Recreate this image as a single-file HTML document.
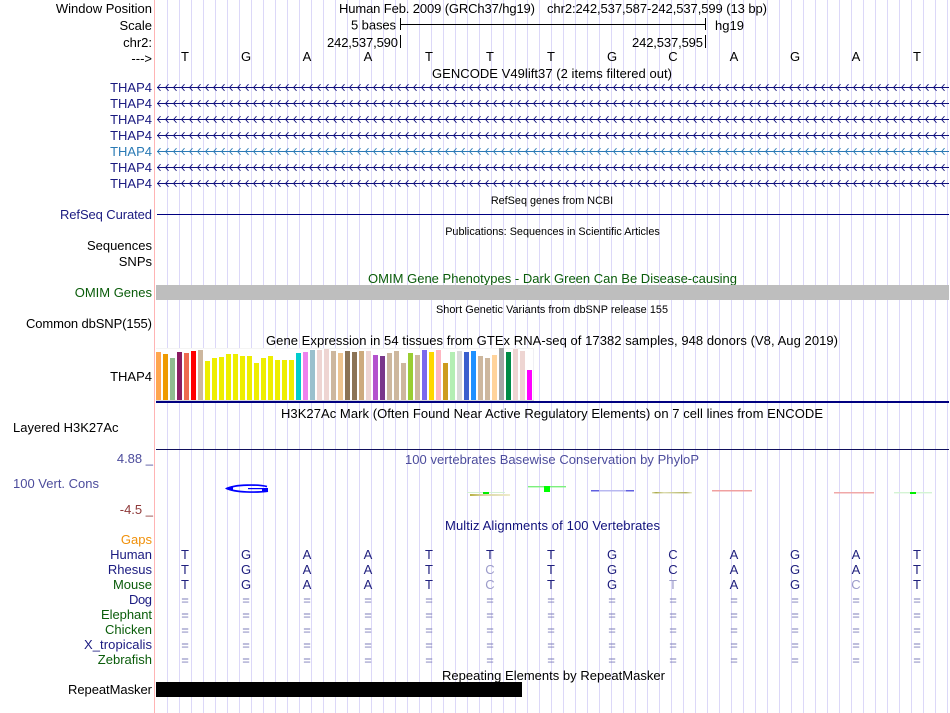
<!DOCTYPE html>
<html><head><meta charset="utf-8"><title>Genome Browser</title>
<style>
html,body{margin:0;padding:0;background:#fff;width:950px;height:713px;overflow:hidden}
svg{display:block}
text{font-family:"Liberation Sans",sans-serif;font-size:13px;fill:#000;white-space:pre}
.r{text-anchor:end}
.c{text-anchor:middle}
.s{font-size:10.85px}
.n{fill:#1a1a80}
.g{fill:#0a5c0a}
.b{text-anchor:middle;fill:#20207e}
.f{text-anchor:middle;fill:#9c9cca}
.e{text-anchor:middle;fill:#7c7cb8}
</style></head><body>
<svg width="950" height="713" viewBox="0 0 950 713" xmlns="http://www.w3.org/2000/svg">
<defs>
<pattern id="grid" patternUnits="userSpaceOnUse" x="167" y="0" width="12" height="713"><rect x="0" y="0" width="1" height="713" fill="#dcd8f8"/></pattern>
<pattern id="cn" patternUnits="userSpaceOnUse" x="157" y="83" width="8" height="16"><path d="M3.5 1.2 L0.6 4.5 L3.5 7.8" fill="none" stroke="#10107c" stroke-width="0.9"/></pattern>
<pattern id="cb" patternUnits="userSpaceOnUse" x="157" y="83" width="8" height="16"><path d="M3.5 1.2 L0.6 4.5 L3.5 7.8" fill="none" stroke="#2a7ab5" stroke-width="0.9"/></pattern>
<linearGradient id="ol" x1="0" x2="1" y1="0" y2="0"><stop offset="0" stop-color="#b8b040"/><stop offset=".3" stop-color="#d8d4a0"/><stop offset="1" stop-color="#efeccc"/></linearGradient>
<linearGradient id="ol2" x1="0" x2="1" y1="0" y2="0"><stop offset="0" stop-color="#e0e0b0"/><stop offset=".1" stop-color="#a8a848"/><stop offset=".3" stop-color="#dcdcb0"/><stop offset=".85" stop-color="#b4b464"/><stop offset="1" stop-color="#eeeed0"/></linearGradient>
</defs>
<rect width="950" height="713" fill="#fff"/>
<rect x="167" y="0" width="781" height="713" fill="url(#grid)"/>
<rect x="154" y="0" width="1" height="713" fill="#ffb4b4"/>

<!-- side labels -->
<text class="r" x="152" y="13">Window Position</text>
<text class="r" x="152" y="30">Scale</text>
<text class="r" x="152" y="47">chr2:</text>
<text class="r" x="152" y="63">---&gt;</text>
<text class="r n" x="152" y="92">THAP4</text>
<text class="r n" x="152" y="108">THAP4</text>
<text class="r n" x="152" y="124">THAP4</text>
<text class="r n" x="152" y="140">THAP4</text>
<text class="r" x="152" y="156" style="fill:#2a7ab5">THAP4</text>
<text class="r n" x="152" y="172">THAP4</text>
<text class="r n" x="152" y="188">THAP4</text>
<text class="n" x="60" y="219" textLength="92">RefSeq Curated</text>
<text class="r" x="152" y="250">Sequences</text>
<text class="r" x="152" y="266">SNPs</text>
<text class="r g" x="152" y="297">OMIM Genes</text>
<text x="26" y="328" textLength="126">Common dbSNP(155)</text>
<text class="r" x="152" y="381">THAP4</text>
<text x="13" y="432">Layered H3K27Ac</text>
<text class="r" x="153" y="463" style="fill:#4c4c9c">4.88 _</text>
<text x="13" y="488" style="fill:#4c4c9c">100 Vert. Cons</text>
<text class="r" x="153" y="514" style="fill:#8f3a3a">-4.5 _</text>
<text class="r" x="152" y="544" style="fill:#f0900a">Gaps</text>
<text class="r n" x="152" y="559">Human</text>
<text class="r n" x="152" y="574">Rhesus</text>
<text class="r g" x="152" y="589">Mouse</text>
<text class="n" x="129" y="604" textLength="23">Dog</text>
<text class="g" x="101" y="619" textLength="51">Elephant</text>
<text class="r g" x="152" y="634">Chicken</text>
<text class="n" x="84" y="649" textLength="68">X_tropicalis</text>
<text class="r g" x="152" y="664">Zebrafish</text>
<text x="68" y="694" textLength="84">RepeatMasker</text>

<!-- header -->
<text x="339" y="13" textLength="196">Human Feb. 2009 (GRCh37/hg19)</text>
<text x="547" y="13" textLength="220">chr2:242,537,587-242,537,599 (13 bp)</text>
<text x="351" y="29.5" textLength="45">5 bases</text>
<rect x="400" y="18" width="1" height="12" fill="#000"/>
<rect x="400" y="24" width="306" height="1" fill="#000"/>
<rect x="705" y="18" width="1" height="12" fill="#000"/>
<text x="715" y="30">hg19</text>
<text x="327" y="47" textLength="71">242,537,590</text>
<rect x="400" y="35" width="1" height="13" fill="#000"/>
<text x="632" y="47" textLength="71">242,537,595</text>
<rect x="705" y="35" width="1" height="13" fill="#000"/>
<text class="c" x="185 246 307 368 429 490 551 612 673 734 795 856 917" y="61">TGAATTTGCAGAT</text>
<text x="432" y="78" textLength="240">GENCODE V49lift37 (2 items filtered out)</text>

<!-- gene rows -->
<g fill="#10107c">
<rect x="157" y="87" width="792" height="1"/>
<rect x="157" y="103" width="792" height="1"/>
<rect x="157" y="119" width="792" height="1"/>
<rect x="157" y="135" width="792" height="1"/>
<rect x="157" y="167" width="792" height="1"/>
<rect x="157" y="183" width="792" height="1"/>
</g>
<rect x="157" y="151" width="792" height="1" fill="#2a7ab5"/>
<rect x="157" y="83" width="792" height="9" fill="url(#cn)"/>
<rect x="157" y="99" width="792" height="9" fill="url(#cn)"/>
<rect x="157" y="115" width="792" height="9" fill="url(#cn)"/>
<rect x="157" y="131" width="792" height="9" fill="url(#cn)"/>
<rect x="157" y="147" width="792" height="9" fill="url(#cb)"/>
<rect x="157" y="163" width="792" height="9" fill="url(#cn)"/>
<rect x="157" y="179" width="792" height="9" fill="url(#cn)"/>

<text class="c s" x="552" y="204">RefSeq genes from NCBI</text>
<rect x="157" y="214" width="792" height="1" fill="#000080"/>
<text class="c s" x="552.5" y="235">Publications: Sequences in Scientific Articles</text>
<text class="g" x="368" y="283" textLength="369">OMIM Gene Phenotypes - Dark Green Can Be Disease-causing</text>
<rect x="156" y="285" width="793" height="15" fill="#bebebe"/>
<text class="s" x="436" y="313" textLength="232">Short Genetic Variants from dbSNP release 155</text>
<text x="266" y="345" textLength="572">Gene Expression in 54 tissues from GTEx RNA-seq of 17382 samples, 948 donors (V8, Aug 2019)</text>

<!-- bar chart -->
<rect x="156" y="348" width="378" height="52" fill="#fff"/>
<rect x="533" y="348" width="1" height="52" fill="#f0f0f4"/>
<rect x="156" y="348" width="378" height="1" fill="#f4f4f4"/>
<g>
<rect x="156" y="352" width="5" height="48" fill="#FFA54F"/>
<rect x="163" y="354" width="5" height="46" fill="#EE9A00"/>
<rect x="170" y="358" width="5" height="42" fill="#8FBC8F"/>
<rect x="177" y="352" width="5" height="48" fill="#8B1C62"/>
<rect x="184" y="353" width="5" height="47" fill="#EE6A50"/>
<rect x="191" y="351" width="5" height="49" fill="#FF0000"/>
<rect x="198" y="350" width="5" height="50" fill="#CDB79E"/>
<rect x="205" y="361" width="5" height="39" fill="#EEEE00"/>
<rect x="212" y="358" width="5" height="42" fill="#EEEE00"/>
<rect x="219" y="357" width="5" height="43" fill="#EEEE00"/>
<rect x="226" y="354" width="5" height="46" fill="#EEEE00"/>
<rect x="233" y="354" width="5" height="46" fill="#EEEE00"/>
<rect x="240" y="356" width="5" height="44" fill="#EEEE00"/>
<rect x="247" y="356" width="5" height="44" fill="#EEEE00"/>
<rect x="254" y="363" width="5" height="37" fill="#EEEE00"/>
<rect x="261" y="358" width="5" height="42" fill="#EEEE00"/>
<rect x="268" y="356" width="5" height="44" fill="#EEEE00"/>
<rect x="275" y="360" width="5" height="40" fill="#EEEE00"/>
<rect x="282" y="360" width="5" height="40" fill="#EEEE00"/>
<rect x="289" y="360" width="5" height="40" fill="#EEEE00"/>
<rect x="296" y="353" width="5" height="47" fill="#00CDCD"/>
<rect x="303" y="352" width="5" height="48" fill="#EE82EE"/>
<rect x="310" y="350" width="5" height="50" fill="#9AC0CD"/>
<rect x="317" y="350" width="5" height="50" fill="#EED5D2"/>
<rect x="324" y="349" width="5" height="51" fill="#EED5D2"/>
<rect x="331" y="351" width="5" height="49" fill="#CDB79E"/>
<rect x="338" y="353" width="5" height="47" fill="#EEC591"/>
<rect x="345" y="351" width="5" height="49" fill="#8B7355"/>
<rect x="352" y="352" width="5" height="48" fill="#8B7355"/>
<rect x="359" y="351" width="5" height="49" fill="#CDAA7D"/>
<rect x="366" y="351" width="5" height="49" fill="#EED5D2"/>
<rect x="373" y="355" width="5" height="45" fill="#B452CD"/>
<rect x="380" y="356" width="5" height="44" fill="#7A378B"/>
<rect x="387" y="353" width="5" height="47" fill="#CDB79E"/>
<rect x="394" y="351" width="5" height="49" fill="#CDB79E"/>
<rect x="401" y="363" width="5" height="37" fill="#CDB79E"/>
<rect x="408" y="353" width="5" height="47" fill="#9ACD32"/>
<rect x="415" y="355" width="5" height="45" fill="#CDB79E"/>
<rect x="422" y="350" width="5" height="50" fill="#7B68EE"/>
<rect x="429" y="352" width="5" height="48" fill="#FFD700"/>
<rect x="436" y="350" width="5" height="50" fill="#FFB6C1"/>
<rect x="443" y="363" width="5" height="37" fill="#CD9B1D"/>
<rect x="450" y="352" width="5" height="48" fill="#B4EEB4"/>
<rect x="457" y="351" width="5" height="49" fill="#D9D9D9"/>
<rect x="464" y="352" width="5" height="48" fill="#3A5FCD"/>
<rect x="471" y="351" width="5" height="49" fill="#1E90FF"/>
<rect x="478" y="356" width="5" height="44" fill="#CDB79E"/>
<rect x="485" y="358" width="5" height="42" fill="#CDB79E"/>
<rect x="492" y="355" width="5" height="45" fill="#FFD39B"/>
<rect x="499" y="348" width="5" height="52" fill="#A6A6A6"/>
<rect x="506" y="352" width="5" height="48" fill="#008B45"/>
<rect x="513" y="349" width="5" height="51" fill="#EED5D2"/>
<rect x="520" y="351" width="5" height="49" fill="#EED5D2"/>
<rect x="527" y="370" width="5" height="30" fill="#FF00FF"/>
</g>
<rect x="156" y="400" width="378" height="1" fill="#d8d8d8"/>
<rect x="156" y="401" width="793" height="2" fill="#000080"/>

<text x="281" y="418" textLength="542">H3K27Ac Mark (Often Found Near Active Regulatory Elements) on 7 cell lines from ENCODE</text>
<rect x="156" y="449" width="793" height="1" fill="#10105c"/>
<text x="405" y="464" textLength="294" style="fill:#4c4c9c">100 vertebrates Basewise Conservation by PhyloP</text>

<!-- conservation -->
<path d="M228 488.5 C234 484.2 260 484.4 267 486.6 M228 488.5 C234 492.6 258 492.6 268 491.2" fill="none" stroke="#0000ff" stroke-width="1.7"/>
<path d="M225 488.5 C227 487 230 486.4 233 486 L233 491 C230 490.6 227 490 225 488.5 Z" fill="#0000ff"/>
<rect x="248" y="488" width="18" height="1.2" fill="#0000ff"/>
<rect x="262" y="488" width="6" height="4" fill="#0000ff"/>
<rect x="467" y="492" width="38" height="1" fill="#d4f0d4"/>
<rect x="470" y="494" width="40" height="2" fill="url(#ol)"/>
<rect x="483" y="492" width="6" height="2" fill="#00ee00"/>
<rect x="528" y="486" width="38" height="1.4" fill="#7cf07c"/>
<rect x="544" y="486" width="6" height="6" fill="#00ff00"/>
<rect x="591" y="490" width="43" height="1.5" fill="#b8b8f0"/>
<rect x="591" y="490" width="8" height="1.5" fill="#6060e0"/>
<rect x="626" y="490" width="8" height="1.5" fill="#6060e0"/>
<rect x="652" y="492" width="40" height="1.4" fill="url(#ol2)"/>
<rect x="712" y="490" width="40" height="1.5" fill="#f0a0a0"/>
<rect x="834" y="492" width="40" height="1.5" fill="#f0a8a8"/>
<rect x="894" y="492" width="38" height="1.4" fill="#d4f4d4"/>
<rect x="910" y="492" width="6" height="2" fill="#00ee00"/>

<text x="445" y="530" textLength="215" style="fill:#10107c">Multiz Alignments of 100 Vertebrates</text>

<!-- alignments -->
<text class="b" x="185 246 307 368 429 490 551 612 673 734 795 856 917" y="559">TGAATTTGCAGAT</text>
<text class="b" x="185 246 307 368 429 551 612 673 734 795 856 917" y="574">TGAATTGCAGAT</text>
<text class="f" x="490" y="574">C</text>
<text class="b" x="185 246 307 368 429 551 612 734 795 917" y="589">TGAATTGAGT</text>
<text class="f" x="490 673 856" y="589">CTC</text>
<text class="e" x="185 246 307 368 429 490 551 612 673 734 795 856 917" y="604.5">=============</text>
<text class="e" x="185 246 307 368 429 490 551 612 673 734 795 856 917" y="619.5">=============</text>
<text class="e" x="185 246 307 368 429 490 551 612 673 734 795 856 917" y="634.5">=============</text>
<text class="e" x="185 246 307 368 429 490 551 612 673 734 795 856 917" y="649.5">=============</text>
<text class="e" x="185 246 307 368 429 490 551 612 673 734 795 856 917" y="664.5">=============</text>

<text x="442" y="680" textLength="223">Repeating Elements by RepeatMasker</text>
<rect x="156" y="682" width="366" height="15" fill="#000"/>
</svg>
</body></html>
